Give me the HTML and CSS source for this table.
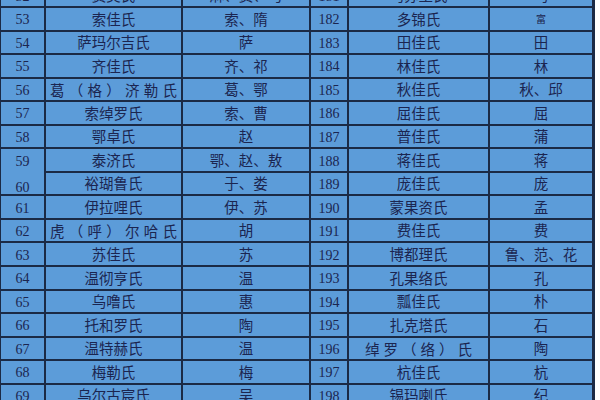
FILE: index.html
```html
<!DOCTYPE html>
<html lang="zh-CN">
<head>
<meta charset="utf-8">
<title>满族姓氏表</title>
<link rel="stylesheet" href="styles.css">
</head>
<body>
<div class="sheet">
  <div class="c num">52</div><div class="c">费莫氏</div><div class="c">麻、费、马</div><div class="c num">181</div><div class="c">乌苏里氏</div><div class="c">乌</div>
  <div class="c num">53</div><div class="c">索佳氏</div><div class="c">索、隋</div><div class="c num">182</div><div class="c">多锦氏</div><div class="c small">富</div>
  <div class="c num">54</div><div class="c">萨玛尔吉氏</div><div class="c">萨</div><div class="c num">183</div><div class="c">田佳氏</div><div class="c">田</div>
  <div class="c num">55</div><div class="c">齐佳氏</div><div class="c">齐、祁</div><div class="c num">184</div><div class="c">林佳氏</div><div class="c">林</div>
  <div class="c num">56</div><div class="c spread">葛（格）济勒氏</div><div class="c">葛、鄂</div><div class="c num">185</div><div class="c">秋佳氏</div><div class="c">秋、邱</div>
  <div class="c num">57</div><div class="c">索绰罗氏</div><div class="c">索、曹</div><div class="c num">186</div><div class="c">屈佳氏</div><div class="c">屈</div>
  <div class="c num">58</div><div class="c">鄂卓氏</div><div class="c">赵</div><div class="c num">187</div><div class="c">普佳氏</div><div class="c">蒲</div>
  <div class="c num joined">59</div><div class="c">泰济氏</div><div class="c">鄂、赵、敖</div><div class="c num">188</div><div class="c">蒋佳氏</div><div class="c">蒋</div>
  <div class="c num lower">60</div><div class="c">裕瑚鲁氏</div><div class="c">于、娄</div><div class="c num">189</div><div class="c">庞佳氏</div><div class="c">庞</div>
  <div class="c num">61</div><div class="c">伊拉哩氏</div><div class="c">伊、苏</div><div class="c num">190</div><div class="c">蒙果资氏</div><div class="c">孟</div>
  <div class="c num">62</div><div class="c spread">虎（呼）尔哈氏</div><div class="c">胡</div><div class="c num">191</div><div class="c">费佳氏</div><div class="c">费</div>
  <div class="c num">63</div><div class="c">苏佳氏</div><div class="c">苏</div><div class="c num">192</div><div class="c">博都理氏</div><div class="c">鲁、范、花</div>
  <div class="c num">64</div><div class="c">温彻亨氏</div><div class="c">温</div><div class="c num">193</div><div class="c">孔果络氏</div><div class="c">孔</div>
  <div class="c num">65</div><div class="c">乌噜氏</div><div class="c">惠</div><div class="c num">194</div><div class="c">瓢佳氏</div><div class="c">朴</div>
  <div class="c num">66</div><div class="c">托和罗氏</div><div class="c">陶</div><div class="c num">195</div><div class="c">扎克塔氏</div><div class="c">石</div>
  <div class="c num">67</div><div class="c">温特赫氏</div><div class="c">温</div><div class="c num">196</div><div class="c spread wide">绰罗（络）氏</div><div class="c">陶</div>
  <div class="c num">68</div><div class="c">梅勒氏</div><div class="c">梅</div><div class="c num">197</div><div class="c">杭佳氏</div><div class="c">杭</div>
  <div class="c num">69</div><div class="c">乌尔古宸氏</div><div class="c">吴</div><div class="c num">198</div><div class="c">锡玛喇氏</div><div class="c">纪</div>
</div>
</body>
</html>
```

FILE: styles.css
```css
html, body {
  margin: 0;
  padding: 0;
  background: #ffffff;
  overflow: hidden;
}

body {
  width: 600px;
  height: 400px;
}

.sheet {
  width: 595px;
  box-sizing: border-box;
  margin-top: -15.56px;
  padding-left: 1px;
  padding-right: 3px;
  display: grid;
  grid-template-columns: 43px 135px 126px 36px 139px 102px;
  grid-auto-rows: 21.56px;
  gap: 2px;
  background: #1b2a45;
}

.c {
  background: #5c9cd9;
  color: #1b2550;
  font-family: "Liberation Serif", "Noto Sans CJK SC", serif;
  font-size: 14.5px;
  line-height: 1;
  display: flex;
  align-items: center;
  justify-content: center;
  padding-top: 2px;
  box-sizing: border-box;
  white-space: nowrap;
}

.num {
  font-size: 14px;
  padding-top: 3px;
}

.small {
  font-size: 10px;
}

.spread {
  display: block;
  text-align: justify;
  text-align-last: justify;
  padding: 5px 4px 0;
}

.spread.wide {
  padding: 5px 16px 0;
}

.joined {
  box-shadow: 0 2px 0 #5c9cd9;
}

.lower {
  padding-top: 8px;
}
```
